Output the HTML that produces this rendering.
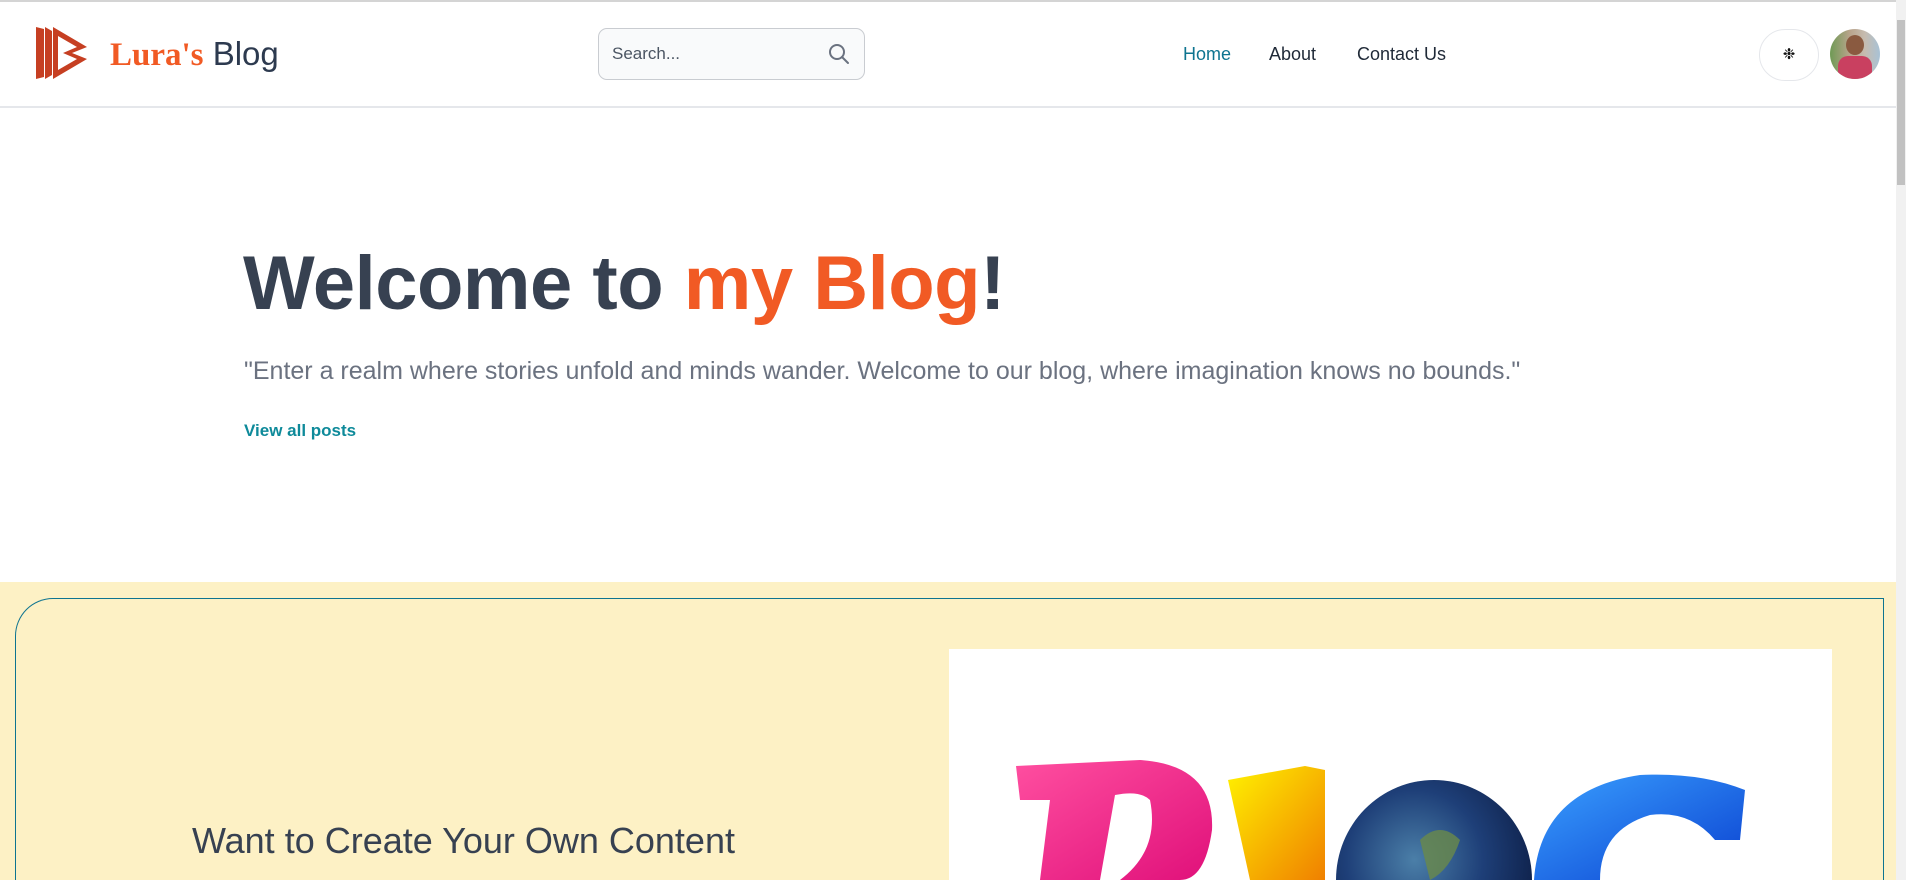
<!DOCTYPE html>
<html style="overflow:hidden"><head><meta charset="utf-8"><style>
*{margin:0;padding:0;box-sizing:border-box}
html,body{width:1906px;height:880px;overflow:hidden}
body{background:#fff;font-family:"Liberation Sans",sans-serif;position:relative}
.hdr{position:absolute;left:0;top:0;width:1896px;height:108px;border-top:2px solid #d4d4d4;border-bottom:2px solid #e5e7eb;background:#fff}
.abs{position:absolute}
.sb{position:absolute;right:0;top:0;width:10px;height:880px;background:#f1f1f1}
.thumb{position:absolute;right:1px;top:20px;width:8px;height:165px;background:#c1c1c1}
</style></head><body>
<div class="hdr">
<svg class="abs" style="left:36px;top:25px" width="52" height="52" viewBox="0 0 52 52">
<polygon points="0,0 8,2 8,50 0,52" fill="#c63f22"/>
<polygon points="9,0 16,4 16,48 9,52" fill="#c63f22"/>
<path d="M17,0 L51,20 L36,26 L51,32 L17,52 Z M22,9 L22,43 L41,32 L27,26 L41,20 Z" fill="#c63f22" fill-rule="evenodd"/>
</svg>
<div class="abs" style="left:110px;top:32px;font-size:33px;line-height:40px;white-space:nowrap"><span style="font-family:'Liberation Serif',serif;font-weight:bold;color:#f15a24">Lura's</span> <span style="color:#2d3a4f">Blog</span></div>
<div class="abs" style="left:598px;top:26px;width:267px;height:52px;border:1px solid #c9ccd1;border-radius:9px;background:#f9fafb">
<span class="abs" style="left:13px;top:15px;font-size:17px;color:#4b5563">Search...</span>
<svg class="abs" style="left:228px;top:13px" width="24" height="24" viewBox="0 0 24 24"><circle cx="10" cy="10" r="7" fill="none" stroke="#6b7280" stroke-width="2"/><line x1="15" y1="15" x2="21" y2="21" stroke="#6b7280" stroke-width="2" stroke-linecap="round"/></svg>
</div>
<div class="abs" style="left:1183px;top:42px;font-size:18px;color:#0e7490">Home</div>
<div class="abs" style="left:1269px;top:42px;font-size:18px;color:#1f2937">About</div>
<div class="abs" style="left:1357px;top:42px;font-size:18px;color:#1f2937">Contact Us</div>
<div class="abs" style="left:1759px;top:27px;width:60px;height:52px;border:1px solid #e5e7eb;border-radius:26px;text-align:center;line-height:50px;font-size:15px;color:#111">&#10057;</div>
<div class="abs" style="left:1830px;top:27px;width:50px;height:50px;border-radius:50%;overflow:hidden;background:linear-gradient(90deg,#6f9a55 0%,#b9a48c 40%,#c6bcb0 70%,#a8c2d6 100%)">
<div class="abs" style="left:16px;top:6px;width:18px;height:20px;border-radius:50%;background:#8a5a40"></div>
<div class="abs" style="left:8px;top:27px;width:34px;height:25px;border-radius:10px 10px 0 0;background:#c94060"></div>
</div>
</div>
<div class="sb"><div class="thumb"></div></div>
<div class="abs" style="left:243px;top:240px;font-size:76px;font-weight:bold;color:#374151;white-space:nowrap;letter-spacing:-0.5px">Welcome to <span style="color:#f15a24">my Blog</span>!</div>
<div class="abs" style="left:244px;top:357px;font-size:25px;color:#6b7280;white-space:nowrap">"Enter a realm where stories unfold and minds wander. Welcome to our blog, where imagination knows no bounds."</div>
<div class="abs" style="left:244px;top:421px;font-size:17px;font-weight:bold;color:#0e8a9a">View all posts</div>
<div class="abs" style="left:0;top:582px;width:1896px;height:298px;background:#fdf1c5"></div>
<div class="abs" style="left:15px;top:598px;width:1869px;height:282px;border:1px solid #0e7490;border-bottom:none;border-top-left-radius:38px"></div>
<div class="abs" style="left:192px;top:820px;font-size:36px;color:#374151;white-space:nowrap">Want to Create Your Own Content</div>
<div class="abs" style="left:949px;top:649px;width:883px;height:231px;background:#fff;overflow:hidden">
<svg width="883" height="231" viewBox="949 649 883 231">
<defs>
<linearGradient id="p" x1="0" y1="0" x2="1" y2="1"><stop offset="0" stop-color="#ff4fa0"/><stop offset="1" stop-color="#e0107a"/></linearGradient>
<linearGradient id="y" x1="0" y1="0" x2="1" y2="1"><stop offset="0" stop-color="#fff200"/><stop offset="1" stop-color="#f08000"/></linearGradient>
<linearGradient id="b" x1="0" y1="0" x2="1" y2="1"><stop offset="0" stop-color="#3aa0ff"/><stop offset="1" stop-color="#0a40d0"/></linearGradient>
<radialGradient id="g" cx="0.4" cy="0.4" r="0.7"><stop offset="0" stop-color="#4b7fa8"/><stop offset="0.5" stop-color="#1e3f78"/><stop offset="1" stop-color="#0b1a40"/></radialGradient>
</defs>
<path d="M1016,766 L1140,760 Q1215,765 1212,830 Q1205,880 1180,880 L1100,880 L1120,880 Q1160,850 1150,800 Q1140,790 1115,795 L1100,880 L1040,880 L1050,800 L1020,800 Z" fill="url(#p)"/>
<path d="M1228,780 L1305,766 L1325,770 L1325,880 L1250,880 Z" fill="url(#y)"/>
<ellipse cx="1434" cy="880" rx="98" ry="100" fill="url(#g)"/>
<path d="M1420,840 q20,-20 40,0 q-10,30 -30,40 z" fill="#6a8a4a" opacity="0.8"/>
<path d="M1534,880 Q1540,790 1640,775 Q1700,772 1745,790 L1740,840 L1715,840 Q1690,810 1650,815 Q1600,830 1600,880 Z" fill="url(#b)"/>
</svg>
</div>
</body></html>
